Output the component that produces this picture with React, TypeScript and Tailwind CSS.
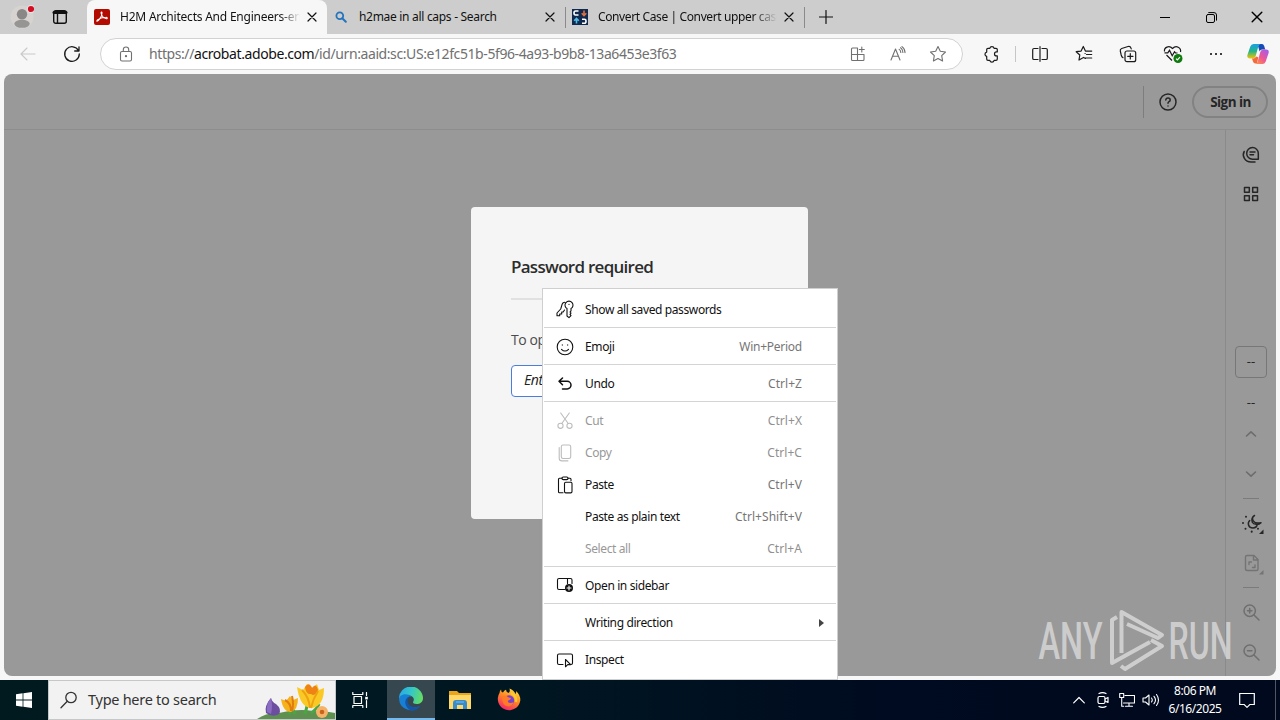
import type { ReactNode } from "react";

type IconProps = { children: ReactNode; className?: string; box?: string; sw?: number };

function Icon({ children, className = "size-5", box = "0 0 20 20", sw = 1.1 }: IconProps) {
  return (
    <svg
      className={"shrink-0 " + className}
      viewBox={box}
      fill="none"
      stroke="currentColor"
      strokeWidth={sw}
      strokeLinecap="round"
      strokeLinejoin="round"
    >
      {children}
    </svg>
  );
}

const CloseIcon = ({ className = "size-[10px]" }: { className?: string }) => (
  <Icon className={className} box="0 0 10 10" sw={1.2}>
    <path d="M1 1l8 8M9 1l-8 8" />
  </Icon>
);

function TabStrip() {
  return (
    <div className="flex h-[34px] bg-[#cdcdcd] text-[12px] text-[#111]">
      <div className="flex w-[87px] items-center rounded-br-lg">
        <div className="flex w-[44px] justify-center">
          <svg className="size-6" viewBox="0 0 24 24">
            <circle cx="12" cy="12" r="11.5" fill="#d6d3d1" />
            <circle cx="12" cy="9.2" r="5.2" fill="#8a8886" />
            <ellipse cx="12" cy="18.8" rx="7.7" ry="4" fill="#979593" />
            <circle cx="21" cy="4" r="4.2" fill="#e6e0e0" />
            <circle cx="21" cy="4" r="3.1" fill="#d20f22" />
          </svg>
        </div>
        <div className="flex w-8 justify-center">
          <Icon className="size-4" box="0 0 16 16" sw={1.4}>
            <rect x="1.7" y="1.7" width="12.6" height="12.6" rx="2" />
            <path d="M2 3.4h12" strokeWidth="3" />
            <path d="M5.5 4v10" />
          </Icon>
        </div>
      </div>
      <div className="flex w-[240px] items-center rounded-t-lg bg-[#f7f7f7] pl-[7px]">
        <svg className="size-4 shrink-0" viewBox="0 0 16 16">
          <rect width="16" height="16" rx="2" fill="#b30b00" />
          <path
            d="M3 12.2c1.500-.2 4.900-4.600 5-8.300 0-1.300-1.200-1.200-.9.300.5 2.800 3 5.200 5.300 5.500 1.400.1 1-1.500-.6-1.400-3 .1-6.500 1.200-8.300 2.700-.6.600-.8 1.200-.5 1.200z"
            fill="none"
            stroke="#fff"
            strokeWidth="1.100"
          />
        </svg>
        <div className="ml-[10px] w-[180px] overflow-hidden whitespace-nowrap tracking-[-0.22px] [mask-image:linear-gradient(to_right,#000_160px,transparent)]">
          H2M Architects And Engineers-en
        </div>
        <CloseIcon className="ml-[7px] size-[10px]" />
      </div>
      <div className="flex w-[239px] items-center border-r pl-[8px] [border-image:linear-gradient(to_bottom,transparent_8px,#8a8a8a_8px,#8a8a8a_27px,transparent_27px)_1]">
        <Icon className="size-[12px] text-[#2474bd]" box="0 0 12 12" sw={1.8}>
          <circle cx="4.800" cy="4.800" r="3.400" />
          <path d="M7.500 7.500l3.300 3.300" strokeWidth="2" />
        </Icon>
        <div className="ml-[12px] w-[186px] whitespace-nowrap tracking-[-0.3px]">h2mae in all caps - Search</div>
        <CloseIcon />
      </div>
      <div className="flex w-[239px] items-center border-r pl-[6px] [border-image:linear-gradient(to_bottom,transparent_8px,#8a8a8a_8px,#8a8a8a_27px,transparent_27px)_1]">
        <svg className="size-4 shrink-0" viewBox="0 0 16 16" fill="none" strokeWidth="1.600">
          <rect width="16" height="16" fill="#10294f" />
          <path d="M6.500 2H3.500Q2 2 2 4t1.500 2h3M10 10.200h2.500q1.500 0 1.500 2t-1.500 2H10" stroke="#fff" />
          <path d="M12 1.500v4.500M9.700 4.200L12 6.500l2.300-2.300" stroke="#e0703f" />
          <path d="M4.500 14.500V10M2.200 11.800l2.300-2.300 2.300 2.300" stroke="#52bce8" />
        </svg>
        <div className="ml-[10px] w-[179px] overflow-hidden whitespace-nowrap tracking-[-0.38px] [mask-image:linear-gradient(to_right,#000_155px,transparent_179px)]">
          Convert Case | Convert upper case
        </div>
        <CloseIcon className="ml-[7px] size-[10px]" />
      </div>
      <div className="flex w-[42px] items-center justify-center">
        <Icon className="size-[14px]" box="0 0 14 14" sw={1.2}>
          <path d="M7 .5v13M.5 7h13" />
        </Icon>
      </div>
      <div className="ml-auto flex w-[138px] text-black">
        <div className="flex w-[46px] items-center justify-center">
          <div className="h-px w-[10px] bg-black" />
        </div>
        <div className="flex w-[46px] items-center justify-center">
          <Icon className="size-[11px]" box="0 0 11 11" sw={1}>
            <rect x=".5" y="2.500" width="8" height="8" rx="1.500" />
            <path d="M2.700.6H8Q10.500.6 10.500 3v5.200" />
          </Icon>
        </div>
        <div className="flex w-[46px] items-center justify-center">
          <CloseIcon className="size-[12px]" />
        </div>
      </div>
    </div>
  );
}

const Cell = ({ children, className = "w-11" }: { children: ReactNode; className?: string }) => (
  <div className={"flex h-full shrink-0 items-center justify-center " + className}>{children}</div>
);

function Toolbar() {
  return (
    <div className="flex h-10 items-center bg-[#f7f7f7] text-[#1b1b1b]">
      <Cell className="w-[56px] text-[#c9c9c9]">
        <Icon className="size-4" box="0 0 16 16">
          <path d="M15 8H1M7 2L1 8l6 6" />
        </Icon>
      </Cell>
      <Cell className="w-[32px]">
        <Icon className="size-[18px]" box="0 0 18 18" sw={1.3}>
          <path d="M15.500 5.700A7.300 7.300 0 1 0 16.300 9M16 1.800v4.200h-4.300" />
        </Icon>
      </Cell>
      <div className="ml-[12px] flex h-8 w-[863px] items-center rounded-full border border-[#d2d2d2] bg-white pl-[17px] text-[#707070]">
        <Icon className="size-4" box="0 0 16 16">
          <rect x="2.500" y="5.500" width="11" height="9.500" rx="1.500" />
          <path d="M5.300 5.300V3.700a2.700 2.700 0 0 1 5.400 0v1.600" />
          <circle cx="8" cy="10.200" r=".6" fill="currentColor" />
        </Icon>
        <div className="ml-[15px] grow pb-px text-[14px] tracking-[-0.41px] whitespace-nowrap">
          https://<span className="text-[#111]">acrobat.adobe.com</span>
          /id/urn:aaid:sc:US:e12fc51b-5f96-4a93-b9b8-13a6453e3f63
        </div>
        <Cell className="w-10">
          <Icon className="size-4" box="0 0 16 16">
            <path d="M7.500 2H2.500Q1.500 2 1.500 3v10.500q0 1 1 1H13q1 0 1-1V8.500H1.500M7.500 2v12.500M11.800 1v5M9.300 3.500h5" />
          </Icon>
        </Cell>
        <Cell className="w-10">
          <Icon className="size-4" box="0 0 16 16">
            <path d="M1 14L5.500 3 10 14M2.700 10.200h5.700M9.200 3.400q1.600 1 1.600 3M10.600 1.700q2.300 1.400 2.300 4.700M12 .6q3 2 3 6" />
          </Icon>
        </Cell>
        <Cell className="mr-[4px] w-10">
          <Icon className="size-[18px]" box="0 0 18 18">
            <path d="M9 1.500l2.300 4.800 5.200.7-3.800 3.700.9 5.300L9 13.500 4.400 16l.9-5.300L1.500 7l5.200-.7z" />
          </Icon>
        </Cell>
      </div>
      <Cell className="ml-[9px] w-[40px]">
        <Icon className="size-[18px]" box="0 0 18 18" sw={1.2}>
          <path d="M6.800 3.300a2.200 2.200 0 0 1 4.300 0H13q1.300 0 1.300 1.300v2.300h-.8a2 2 0 0 0 0 4h.8V14q0 1.300-1.300 1.300h-1.900a2.200 2.200 0 0 1-4.300 0H5Q3.700 15.300 3.700 14v-2.600a2.200 2.200 0 0 1 0-4.300V4.600Q3.700 3.300 5 3.300z" />
        </Icon>
      </Cell>
      <div className="ml-[3px] h-4 w-px bg-[#c6c6c6]" />
      <Cell className="ml-[2px] w-11">
        <Icon className="size-4" box="0 0 16 16" sw={1.2}>
          <path d="M6 2.500H2Q.7 2.500.7 3.800v8.400Q.7 13.500 2 13.500h4M10 2.500h4q1.300 0 1.300 1.300v8.400q0 1.300-1.300 1.300h-4M8 .7v14.600" />
        </Icon>
      </Cell>
      <Cell>
        <Icon className="size-[18px]" box="0 0 18 18" sw={1.2}>
          <path d="M8.500 12.500L4 15l.8-5L1.200 6.700l4.900-.6L8.300 1.500l2.100 4.600h6.300M11.500 9.500h5.200M10.500 13h6.200M8.500 12.500l2 .9M10 8.500h.2" />
        </Icon>
      </Cell>
      <Cell>
        <Icon className="size-[18px]" box="0 0 18 18" sw={1.200}>
          <rect x="6" y="6" width="10.700" height="10.700" rx="2" />
          <path d="M11.300 8.700v5.300M8.700 11.300H14M4 12.700Q2.700 12 2.200 10L1.300 6Q.9 4.200 2.700 3.500L9 1.500q2.300-.6 3 1.700l.2.700" />
        </Icon>
      </Cell>
      <Cell className="w-11 pl-px">
        <svg className="size-[20px]" viewBox="0 0 20 20" fill="none" stroke="currentColor" strokeWidth="1.200">
          <path d="M9 16.500L3.500 11M1.500 7.500C.8 3.500 6 .8 9.500 4.500 13 .8 18.500 3.500 17.500 8M1.500 8.800h3.300l1.700-2.500 2.700 5.500 2.300-4 1 1.200h2" />
          <circle cx="15" cy="14.500" r="4.500" fill="#0f7b0f" stroke="none" />
          <path d="M13 14.600l1.400 1.400 2.600-2.800" stroke="#fff" />
        </svg>
      </Cell>
      <Cell>
        <div className="flex gap-[3px]">
          <div className="size-[2px] rounded-full bg-black" />
          <div className="size-[2px] rounded-full bg-black" />
          <div className="size-[2px] rounded-full bg-black" />
        </div>
      </Cell>
      <Cell className="w-[40px]">
        <svg className="size-[22px]" viewBox="0 0 22 22">
          <defs>
            <linearGradient id="cpA" x1="0" y1="0" x2="0" y2="1">
              <stop offset="0" stopColor="#1a9ee8" />
              <stop offset=".5" stopColor="#22b58a" />
              <stop offset="1" stopColor="#f5c400" />
            </linearGradient>
            <linearGradient id="cpB" x1="0" y1="1" x2=".8" y2="0">
              <stop offset="0" stopColor="#ff9a3d" />
              <stop offset=".5" stopColor="#ee5596" />
              <stop offset="1" stopColor="#a65ce8" />
            </linearGradient>
          </defs>
          <path d="M12 1h3q1.500 0 2.200 2l1 3.500h-3q-2 0-2.600 2L11 3z" fill="#174bb8" />
          <path d="M6.500 1h7q-1.600.6-2.200 2.600L8.700 13q-.7 2.500-3 2.500H3Q-.3 15.500.4 12L3.300 3.500Q4.200 1 6.500 1z" fill="url(#cpA)" />
          <path d="M5 15.500h1.500q1.700 0 2.500-2l2.300.8L10 20.500H8.500q-2 0-2.500-2z" fill="#f26b3a" />
          <path d="M15.500 21h-7q1.600-.6 2.200-2.600L13.300 9q.7-2.500 3-2.500H19q3.300 0 2.600 3.500l-2.900 8.500Q17.800 21 15.500 21z" fill="url(#cpB)" />
        </svg>
      </Cell>
    </div>
  );
}

function SideRail() {
  return (
    <div className="flex w-[51px] flex-col items-center border-l border-[#8a8a8a] pt-[14px] text-[#262626]">
      <Icon className="size-5" sw={1.5}>
        <path d="M17.300 15.200V9.300a5.800 5.800 0 1 0-5.800 5.900zM9 8h5M9 10.800h3.500M3.200 7.500C.6 12 4 18 10 18h4" />
      </Icon>
      <Icon className="mt-5 size-5" sw={1.500}>
        <rect x="3.500" y="3.500" width="4.800" height="4.800" />
        <rect x="11.700" y="3.500" width="4.800" height="4.800" />
        <rect x="3.500" y="11.700" width="4.800" height="4.800" />
        <rect x="11.700" y="11.700" width="4.800" height="4.800" />
      </Icon>
      <div className="mt-[142px] flex h-8 w-8 items-center justify-center rounded border border-[#777] text-[13px]">--</div>
      <div className="mt-[14px] h-5 text-[13px] leading-5">--</div>
      <Icon className="mt-[12px] size-5 text-[#6c6c6c]" sw={1.600}>
        <path d="M5.500 12L10 7.800l4.500 4.200" />
      </Icon>
      <Icon className="mt-5 size-5 text-[#6c6c6c]" sw={1.600}>
        <path d="M5.500 8l4.500 4.200L14.500 8" />
      </Icon>
      <div className="mt-[14px] h-px w-4 bg-[#7b7b7b]" />
      <Icon className="mt-[14px] ml-[3px] h-[22px] w-[24px]" box="0 0 24 22" sw={1.500}>
        <path d="M13.500 2.500c-4 3-1.500 9 6.500 7.200-2.500 2.600-7.500 2-8.700-.500-1-2.200-.3-5.200 2.200-6.700zM8.700 7.500c-2.500 2.500-1.500 7.500 3.300 7.500 2.300 0 3.700-1.300 4.200-3" />
        <path d="M5 3.700v.1M2 10v.1M4.500 15.700v.1M10.700 18.600v.1M17 15.700v.1" strokeWidth="2" />
        <path d="M22.500 16.500v4.500H18z" fill="currentColor" stroke="none" />
      </Icon>
      <Icon className="mt-[18px] ml-[3px] h-[22px] w-[24px] text-[#747474]" box="0 0 24 22" sw={1.400}>
        <path d="M6 2.500h7l4 4V16q0 1.500-1.500 1.500h-9Q4.500 17.500 4.500 16V4Q4.500 2.500 6 2.500zM12.500 2.500V7H17M8 9v2.500M8 9h2.500M14 14.500v-2.500M14 14.500h-2.500" />
        <path d="M22.500 17v4.500H18z" fill="currentColor" stroke="none" />
      </Icon>
      <div className="mt-[12px] h-px w-4 bg-[#7b7b7b]" />
      <Icon className="mt-[14px] size-5 text-[#6f6f6f]" sw={1.500}>
        <circle cx="8.700" cy="8.700" r="5.700" />
        <path d="M13 13l5 5M8.700 6.500v4.400M6.500 8.700h4.400" />
      </Icon>
      <Icon className="mt-5 size-5 text-[#6f6f6f]" sw={1.500}>
        <circle cx="8.700" cy="8.700" r="5.700" />
        <path d="M13 13l5 5M6.500 8.700h4.400" />
      </Icon>
    </div>
  );
}

function Watermark() {
  return (
    <svg className="absolute top-[534px] left-[1026px] h-[66px] w-[210px]" viewBox="1030 608 210 66">
      <g fill="#fff" fillOpacity=".52" fontFamily="Roboto, sans-serif" fontSize="51" fontWeight="500">
        <text x="1038.500" y="659" textLength="64" lengthAdjust="spacingAndGlyphs">ANY</text>
        <text x="1168.500" y="659" textLength="64" lengthAdjust="spacingAndGlyphs">RUN</text>
      </g>
      <g fill="none" stroke="#fff" strokeOpacity=".52" strokeWidth="4" strokeLinejoin="round">
        <path d="M1117 617L1112 620V663L1150 642" />
        <path d="M1121.500 653V612L1162 635 1158 638 1127 624" />
        <path d="M1121 666L1125 669 1162 646 1151 640" />
      </g>
    </svg>
  );
}

function PasswordDialog() {
  return (
    <div className="absolute inset-0 flex items-start justify-center pt-[133px] pr-px">
      <div className="flex h-[312px] w-[337px] flex-col rounded-[4px] bg-[#f5f5f5] px-10 pt-[48px] font-['Open_Sans','Noto_Sans',sans-serif]">
        <h1 className="text-[17px] leading-6 font-semibold tracking-[-0.72px] whitespace-nowrap text-[#2c2c2c]">Password required</h1>
        <div className="mt-[19px] h-[2px] shrink-0 bg-[#e1e1e1]" />
        <p className="mt-[30px] text-[14px] leading-5 tracking-[-0.4px] whitespace-nowrap text-[#4b4b4b]">To op</p>
        <div className="mt-[15px] flex h-8 items-center rounded-[4px] border border-[#4b7ddd] bg-white pb-[3px] pl-3 text-[14px] tracking-[-0.4px] text-[#222] italic">
          Ent
        </div>
      </div>
    </div>
  );
}

const icons = {
  key: (
    <path d="M12 8.600a4 4 0 1 1 4 0v2.200l-1 1.200 1 1.200-1 1.200 1 1.200-2 2-2-1.600zM14 4.300v.2M9.800 2.300q-2 0-2.700 2L5.700 9 2 13v2.700h2.700V14h2v-2h1.500L9.500 10" />
  ),
  emoji: (
    <>
      <circle cx="10" cy="10" r="7.800" />
      <path d="M6.500 12.300q3.500 3.400 7 0M7.300 7.700v.4M12.700 7.700v.4" />
    </>
  ),
  undo: <path d="M7.500 4L4 7.300l3.500 3.400M4.200 7.300h8a3.800 3.800 0 0 1 0 7.600H7.500" strokeWidth="1.500" />,
  cut: (
    <>
      <circle cx="5.500" cy="14.800" r="2.600" />
      <circle cx="14.500" cy="14.800" r="2.600" />
      <path d="M6.800 12.500L14.300 2M13.200 12.500L5.700 2" />
    </>
  ),
  copy: (
    <>
      <rect x="6.300" y="2" width="9.400" height="13.500" rx="1.700" />
      <path d="M4.200 4.500v10.700q0 2.700 2.700 2.700h6" />
    </>
  ),
  paste: (
    <>
      <path d="M7 3.300H4.500q-1 0-1 1v12.500q0 1 1 1H8M13 3.300h2q1 0 1 1v1.500" />
      <rect x="7" y="2" width="6" height="2.600" rx="1.200" />
      <rect x="9.500" y="7.200" width="7.500" height="10.700" rx="1.300" />
    </>
  ),
  sidebar: (
    <>
      <path d="M10 13.500H4q-1.500 0-1.500-1.500V4Q2.500 2.500 4 2.500h11.500Q17 2.500 17 4v3.500M12.500 2.500v5" />
      <circle cx="14" cy="12" r="4" fill="currentColor" stroke="none" />
      <path d="M14 10v4M12 12h4" stroke="#fff" />
    </>
  ),
  inspect: (
    <>
      <path d="M8 14.500H4q-1.500 0-1.500-1.500V5.500Q2.500 4 4 4h12q1.500 0 1.500 1.500V13q0 1-1 1.400" />
      <path d="M10.500 9.500v7.300l2.200-2.200h3z" />
    </>
  ),
};

type Row = { label: string; keys?: string; icon?: keyof typeof icons; off?: boolean; sub?: boolean; sep?: boolean };

const rows: Row[] = [
  { label: "Show all saved passwords", icon: "key", sep: true },
  { label: "Emoji", keys: "Win+Period", icon: "emoji", sep: true },
  { label: "Undo", keys: "Ctrl+Z", icon: "undo", sep: true },
  { label: "Cut", keys: "Ctrl+X", icon: "cut", off: true },
  { label: "Copy", keys: "Ctrl+C", icon: "copy", off: true },
  { label: "Paste", keys: "Ctrl+V", icon: "paste" },
  { label: "Paste as plain text", keys: "Ctrl+Shift+V" },
  { label: "Select all", keys: "Ctrl+A", off: true, sep: true },
  { label: "Open in sidebar", icon: "sidebar", sep: true },
  { label: "Writing direction", sub: true, sep: true },
  { label: "Inspect", icon: "inspect" },
];

function ContextMenu() {
  return (
    <div className="absolute top-[288px] left-[542px] h-[392px] w-[296px] border border-[#cfcfcf] bg-white pt-[5px] text-[12px] tracking-[-0.38px]">
      {rows.map((r) => (
        <div key={r.label}>
          <div className={"flex h-8 items-center pl-3 " + (r.off ? "text-[#989898]" : "text-[#111]")}>
            <div className={"w-5 " + (r.off ? "text-[#bdbdbd]" : "")}>{r.icon && <Icon>{icons[r.icon]}</Icon>}</div>
            <div className="ml-[10px] grow">{r.label}</div>
            {r.keys && (
              <div
                className={
                  "mr-[35px] " +
                  (r.keys === "Win+Period" ? "tracking-[-0.25px] " : "tracking-[0.05px] ") +
                  (r.off ? "text-[#909090]" : "text-[#767676]")
                }
              >
                {r.keys}
              </div>
            )}
            {r.sub && (
              <svg className="mr-[13px] h-[8px] w-[5px]" viewBox="0 0 5 8">
                <path d="M0 0l5 4-5 4z" fill="#444" />
              </svg>
            )}
          </div>
          {r.sep && <div className="mx-px mt-px mb-[3px] h-px bg-[#d4d4d4]" />}
        </div>
      ))}
    </div>
  );
}

function Flowers() {
  return (
    <svg className="ml-auto h-[38px] w-[80px] shrink-0" viewBox="0 0 80 38">
      <path d="M2 38q10-7 22-6 20-5 34-2 14 0 22 2v6z" fill="#5e9150" />
      <path d="M34 33q3-6 3-12M50 33q2-8 4-15M56 32q6-4 8-9M40 33q-3-8-6-8" stroke="#4aa644" strokeWidth="3" fill="none" />
      <path d="M11 32q-2-7 5-15 1 4 5 6 6 5 3 10-6 4-13-1z" fill="#6b4ea0" />
      <path d="M16 17q2 8 0 16l-4-2q-1-9 4-14z" fill="#8a6cc0" />
      <path d="M26 18l5 2 4-5 3 4 5-2q0 12-7 14-8 0-10-13z" fill="#f6b21b" />
      <path d="M30 19q6 3 6 11M37 15q2 8 0 15" stroke="#e07c10" strokeWidth="2" fill="none" />
      <path d="M42 6l6 3 4-6 6 4 4-4 2 6 5-2q0 18-12 20-12 0-15-21z" fill="#fbc926" />
      <path d="M50 6q4-6 7 1 4-6 6 2-3 7-7 4-5 1-6-7z" fill="#ee8214" />
      <path d="M47 9q7 7 8 18M63 10q-5 8-7 17" stroke="#eea212" strokeWidth="2" fill="none" />
      <circle cx="67" cy="31" r="6" fill="#f5b268" />
      <circle cx="67" cy="31" r="2.300" fill="#c7661b" />
    </svg>
  );
}

function Taskbar() {
  return (
    <div className="flex h-10 bg-[linear-gradient(to_right,#001a20,#001721_40%,#000a20_70%,#00091d)] text-white">
      <Cell className="w-12">
        <svg className="size-4" viewBox="0 0 16 16" fill="#fff">
          <path d="M0 2.300L6.600 1.300v6.300H0zM7.400 1.200L16 0v7.600H7.400zM0 8.400h6.600v6.300L0 13.700zM7.400 8.400H16V16l-8.600-1.200z" />
        </svg>
      </Cell>
      <div className="flex w-72 items-center border border-[#c5c8c9] bg-[#f2f2f2] pl-[11px] text-[#333]">
        <Icon className="size-[18px]" box="0 0 18 18" sw={1.300}>
          <circle cx="11" cy="6.500" r="5.200" />
          <path d="M7.300 10.300L1 16.700" />
        </Icon>
        <div className="ml-[10px] text-[14.500px] tracking-[-0.27px] whitespace-nowrap">Type here to search</div>
        <Flowers />
      </div>
      <Cell className="w-[51px] pr-[3px]">
        <Icon className="size-4" box="0 0 16 16" sw={1.200}>
          <path d="M.8.500v2h10v-2M.8 15.500v-2h10v2M2 4.500h7.500v7H2zM14.500.5v3M14.500 8.500v7" />
          <rect x="13.200" y="4.800" width="2.600" height="2.600" fill="#fff" stroke="none" />
        </Icon>
      </Cell>
      <Cell className="w-12 border-b-2 border-[#76b9ed] bg-[#36474f]">
        <svg className="size-6" viewBox="0 0 24 24">
          <defs>
            <linearGradient id="edA" x1="0" y1=".3" x2="1" y2=".5">
              <stop offset="0" stopColor="#29a9e8" />
              <stop offset=".5" stopColor="#35c7c5" />
              <stop offset="1" stopColor="#66dd62" />
            </linearGradient>
          </defs>
          <path d="M0 12A12 12 0 0 1 24 11c0 4-3 6-6.500 6-3 0-4-1.200-3.300-2.300C16 12 14 8.500 9.500 8.500 4 8.500.500 10.500 0 12z" fill="url(#edA)" />
          <path d="M0 12C1 6 9 6 12.500 9.500 9 9 7.500 12 8 15c1 5 7 7 13 4A12 12 0 0 1 0 12z" fill="#1780d4" />
          <path d="M12 9.300C8 9.500 5.500 13 6.500 17c1 4 4 6.500 7 6.800 3.500-.3 6-2 7.800-4.500C16 21.500 10 20 8.800 15.500 8 12.500 9.500 10 12 9.300z" fill="#1456a5" />
        </svg>
      </Cell>
      <Cell className="w-[49px]">
        <svg className="h-[20px] w-[22px]" viewBox="0 0 22 20">
          <path d="M0 1h8l2 2h12v16H0z" fill="#e9a51b" />
          <path d="M0 5h22v14H0z" fill="#ffd868" />
          <path d="M4 19v-6q0-3 3-3h8q3 0 3 3v6h-4v-4H8v4z" fill="#398ccc" />
          <path d="M7 12h8" stroke="#77bde8" />
        </svg>
      </Cell>
      <Cell className="w-[49px]">
        <svg className="size-6" viewBox="0 0 24 24">
          <defs>
            <linearGradient id="ff" x1=".8" y1="0" x2=".3" y2="1">
              <stop offset="0" stopColor="#ffe23f" />
              <stop offset=".45" stopColor="#ff8b24" />
              <stop offset="1" stopColor="#f5236b" />
            </linearGradient>
          </defs>
          <path d="M2.500 5q0-2 1.500-3.500Q4 4 6 4.500 7 2.500 9 1.800 9 4 11.500 5q2-1 1-4.500Q17 2 18.500 6q1-1 .5-3 4.500 4 4.300 9.500A11.300 11.300 0 1 1 2.500 5z" fill="url(#ff)" />
          <circle cx="12" cy="12.500" r="5.200" fill="#7840cf" />
          <path d="M5 9q4-2.500 6 .3l3 .7q-.5 2-3 2.500-.5 2 2 2.500 2.500 0 3.500-1-1 4.500-5.500 4.300Q5 17.500 5 9z" fill="#ff7b27" />
          <path d="M14 5q6 3 5 9" stroke="#ffca30" strokeWidth="2.500" fill="none" />
        </svg>
      </Cell>
      <div className="ml-auto flex">
        <Cell className="w-6">
          <Icon className="size-3" box="0 0 12 12" sw={1.200}>
            <path d="M.7 8.800L6 3.500l5.300 5.300" />
          </Icon>
        </Cell>
        <Cell className="w-6">
          <Icon className="h-4 w-[14px]" box="0 0 14 16" sw={1.200}>
            <rect x="2" y="4.500" width="7" height="7" rx="1.500" />
            <path d="M9 7l3-1.500v5L9 9M3 1.500q3.500-1.800 7 0M3 14.500q3.500 1.800 7 0" />
          </Icon>
        </Cell>
        <Cell className="w-6">
          <Icon className="size-4" box="0 0 16 16">
            <path d="M6 3.500h9.500v7.500H4.500M10 11v3M6.500 14.300h7M.7 1.500h4v4h-4zM2.700 5.500v8.800h2" />
          </Icon>
        </Cell>
        <Cell className="w-6">
          <Icon className="h-4 w-[18px]" box="0 0 18 16">
            <path d="M1 6h2.500L7 3v10L3.500 10H1zM9.500 6q1.500 2 0 4M12 4.300q3 3.700 0 7.400M14.500 2.500q4 5.500 0 11" />
          </Icon>
        </Cell>
        <div className="flex w-[64px] flex-col items-center justify-center text-[12px] leading-[18px] tracking-[-0.45px] whitespace-nowrap">
          <div>8:06 PM</div>
          <div>6/16/2025</div>
        </div>
        <Cell className="w-[40px]">
          <Icon className="size-4" box="0 0 16 16" sw={1.200}>
            <path d="M.7 1.500h14.600v11h-4.500L8 15.300l-2.800-2.800H.7z" strokeLinejoin="miter" />
          </Icon>
        </Cell>
        <div className="ml-[8px] h-full w-px bg-[#4f5664]" />
        <div className="w-1" />
      </div>
    </div>
  );
}

export default function App() {
  return (
    <div className="relative flex h-[720px] w-[1280px] flex-col overflow-hidden bg-[#f7f7f7] font-['Noto_Sans','Open_Sans',sans-serif]">
      <TabStrip />
      <Toolbar />
      <div className="relative mx-1 mb-1 flex h-[602px] flex-col overflow-hidden rounded-lg bg-[#999]">
        <div className="flex h-[56px] shrink-0 items-center justify-end border-b border-[#8d8d8d] pr-[8px] text-[#262626]">
          <div className="h-8 w-px bg-[#7d7d7d]" />
          <Icon className="ml-[15px] size-[18px]" box="0 0 18 18" sw={1.500}>
            <circle cx="9" cy="9" r="8" />
            <path d="M6.800 7q.2-2 2.200-2 2.200 0 2.200 1.900 0 1.100-1.200 1.800-1 .6-1 1.600M9 12.900v.1" />
          </Icon>
          <div className="ml-[15px] flex h-8 w-[76px] items-center justify-center rounded-full border-2 border-[#828282] pt-px pl-px font-['Open_Sans',sans-serif] text-[13.500px] font-bold tracking-[-0.55px]">
            Sign in
          </div>
        </div>
        <div className="flex grow justify-end">
          <SideRail />
        </div>
        <PasswordDialog />
        <Watermark />
      </div>
      <Taskbar />
      <ContextMenu />
    </div>
  );
}
